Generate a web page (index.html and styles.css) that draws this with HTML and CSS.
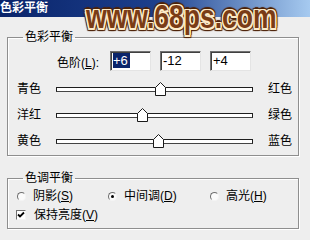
FILE: index.html
```html
<!DOCTYPE html>
<html lang="zh">
<head>
<meta charset="utf-8">
<title>色彩平衡</title>
<link rel="stylesheet" href="styles.css">
</head>
<body>
<div class="window">
  <div class="titlebar"><span class="title">色彩平衡</span></div>
  <div class="watermark">www.68ps.com</div>
  <div class="content">
    <fieldset class="group group-balance">
      <legend>色彩平衡</legend>
      <div class="levels">
        <span class="levels-label">色阶(<u>L</u>):</span>
        <span class="field"><span class="sel">+6</span></span>
        <span class="field">-12</span>
        <span class="field">+4</span>
      </div>
      <div class="slider-row">
        <span class="lbl">青色</span>
        <div class="track"><span class="thumb" style="left:53%"><svg width="11" height="14" viewBox="0 0 11 14"><path d="M0.5 5.5 L5.5 0.5 L10.5 5.5 L10.5 13.5 L0.5 13.5 Z" fill="#fff" stroke="#1a1a1a"/></svg></span></div>
        <span class="lbl">红色</span>
      </div>
      <div class="slider-row">
        <span class="lbl">洋红</span>
        <div class="track"><span class="thumb" style="left:44%"><svg width="11" height="14" viewBox="0 0 11 14"><path d="M0.5 5.5 L5.5 0.5 L10.5 5.5 L10.5 13.5 L0.5 13.5 Z" fill="#fff" stroke="#1a1a1a"/></svg></span></div>
        <span class="lbl">绿色</span>
      </div>
      <div class="slider-row">
        <span class="lbl">黄色</span>
        <div class="track"><span class="thumb" style="left:52%"><svg width="11" height="14" viewBox="0 0 11 14"><path d="M0.5 5.5 L5.5 0.5 L10.5 5.5 L10.5 13.5 L0.5 13.5 Z" fill="#fff" stroke="#1a1a1a"/></svg></span></div>
        <span class="lbl">蓝色</span>
      </div>
    </fieldset>
    <fieldset class="group group-tone">
      <legend>色调平衡</legend>
      <div class="radios">
        <span class="opt"><span class="radio"></span>阴影(<u>S</u>)</span>
        <span class="opt"><span class="radio checked"></span>中间调(<u>D</u>)</span>
        <span class="opt"><span class="radio"></span>高光(<u>H</u>)</span>
      </div>
      <div class="check"><span class="box"><svg width="8" height="8" viewBox="0 0 8 8"><path d="M1 3.5 L3 5.5 L7 1.5" fill="none" stroke="#000" stroke-width="1.8"/></svg></span>保持亮度(<u>V</u>)</div>
    </fieldset>
  </div>
</div>
</body>
</html>
```
FILE: styles.css
```css
html, body {
  margin: 0;
  padding: 0;
}
body {
  background: #eeeeee;
  font-family: "Liberation Sans", "Noto Sans CJK SC", sans-serif;
  font-size: 12px;
  color: #000;
}
.window {
  position: relative;
  width: 310px;
  height: 240px;
  overflow: hidden;
}
.titlebar {
  height: 17px;
  background: linear-gradient(to right, #0a246a 0%, #1c3f8c 50%, #a6caf0 100%);
  color: #fff;
  font-weight: bold;
  font-size: 12px;
  line-height: 17px;
  white-space: nowrap;
}
.watermark {
  position: absolute;
  left: 86px;
  top: 0;
  font-family: "Liberation Sans", sans-serif;
  font-weight: bold;
  font-size: 34px;
  line-height: 32px;
  color: #7a3c16;
  transform: scaleX(0.78);
  transform-origin: left top;
  white-space: nowrap;
  text-shadow:
    1.5px 0 0 #fdebc8, -1.5px 0 0 #fdebc8, 0 1.5px 0 #fdebc8, 0 -1.5px 0 #fdebc8,
    1.5px 1.5px 0 #fdebc8, -1.5px -1.5px 0 #fdebc8, 1.5px -1.5px 0 #fdebc8, -1.5px 1.5px 0 #fdebc8,
    3px 0 1px #4d2208, -3px 0 1px #4d2208, 0 3px 1px #4d2208, 0 -3px 1px #4d2208,
    2.5px 2.5px 1px #4d2208, -2.5px -2.5px 1px #4d2208, 2.5px -2.5px 1px #4d2208, -2.5px 2.5px 1px #4d2208;
}
.content {
  padding: 14px 11px 0 7px;
}
.group {
  margin: 0;
  border: 1px solid #8e8e8e;
  box-shadow: 1px 1px 0 #fff, inset 1px 1px 0 #fff;
  padding: 8px 0 1px 9px;
}
.group legend {
  padding: 0 2px;
  margin-left: 6px;
  font-size: 12px;
  line-height: 12px;
  height: 12px;
}
.levels {
  display: flex;
  align-items: center;
  height: 20px;
  margin-bottom: 5px;
}
.levels-label {
  margin-left: 40px;
  width: 53px;
}
.field {
  box-sizing: border-box;
  width: 41px;
  height: 20px;
  margin-right: 9px;
  background: #fff;
  border-style: solid;
  border-width: 1px;
  border-color: #707070 #e4e4e4 #e4e4e4 #707070;
  box-shadow: inset 1px 1px 0 #404040;
  font-size: 13px;
  line-height: 18px;
  padding-left: 2px;
}
.sel {
  display: inline-block;
  background: #0a246a;
  color: #fff;
  line-height: 15px;
  padding: 0 2px 0 0;
}
.slider-row {
  display: grid;
  grid-template-columns: 39px 197px 15px auto;
  height: 26px;
  line-height: 26px;
}
.slider-row .lbl:last-child {
  grid-column: 4;
}
.track {
  position: relative;
  box-sizing: border-box;
  height: 5px;
  margin-top: 11px;
  background: #fff;
  border: 1px solid #1e1e1e;
  border-bottom-color: #444;
}
.thumb {
  position: absolute;
  top: -6px;
  margin-left: -5.5px;
  width: 11px;
  height: 14px;
  line-height: 0;
}
.group-tone {
  margin-top: 16px;
  padding: 4px 0 5px 9px;
}
.radios {
  display: grid;
  grid-template-columns: 91px 102px auto;
  height: 16px;
  line-height: 16px;
}
.opt {
  display: flex;
  align-items: center;
}
.radio {
  box-sizing: border-box;
  width: 9px;
  height: 9px;
  border-radius: 50%;
  border: 1px solid;
  border-color: #6f6f6f #f4f4f4 #f4f4f4 #6f6f6f;
  background: #fbfbfb;
  margin-right: 7px;
  position: relative;
}
.radio.checked::after {
  content: "";
  position: absolute;
  left: 2px;
  top: 2px;
  width: 3px;
  height: 3px;
  border-radius: 50%;
  background: #000;
}
.check {
  display: flex;
  align-items: center;
  margin-top: 3px;
  height: 16px;
  line-height: 16px;
}
.box {
  box-sizing: border-box;
  width: 10px;
  height: 10px;
  background: #fff;
  border: 1px solid;
  border-color: #6f6f6f #f4f4f4 #f4f4f4 #6f6f6f;
  margin-left: -1px;
  margin-right: 8px;
  display: flex;
  align-items: center;
  justify-content: center;
}
.box svg {
  display: block;
}
u {
  text-decoration: underline;
}
```
